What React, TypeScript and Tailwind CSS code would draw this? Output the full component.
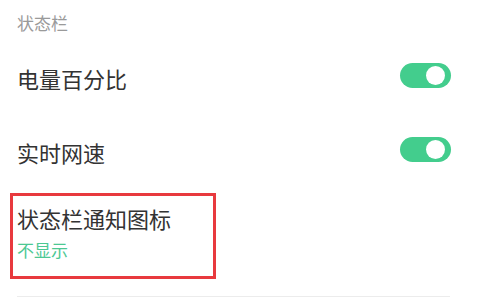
import React from "react";

function Toggle() {
  return (
    <div className="relative h-[25px] w-[51px] rounded-full bg-[#43cd8d]">
      <div className="absolute left-[26px] top-[3px] h-[19px] w-[19px] rounded-full bg-white" />
    </div>
  );
}

export default function App() {
  return (
    <div
      className="w-[478px] h-[301px] bg-white overflow-hidden"
      style={{ fontFamily: '"Noto Sans CJK SC", "Noto Sans", sans-serif' }}
    >
      <div className="pl-[17px] pt-[14px] pb-[10px] text-[17px] leading-[17px] text-[#9a9a9a]">
        状态栏
      </div>
      <div className="flex h-[74px] items-center justify-between pl-[17px] pr-[27px]">
        <span className="text-[22px] leading-[22px] text-[#333333]">电量百分比</span>
        <div className="-mt-[5px]">
          <Toggle />
        </div>
      </div>
      <div className="flex h-[74px] items-center justify-between pl-[17px] pr-[27px]">
        <span className="text-[22px] leading-[22px] text-[#333333]">实时网速</span>
        <div className="-mt-[5px]">
          <Toggle />
        </div>
      </div>
      <div className="ml-[10px] mt-[4px] h-[86px] w-[206px] border-[3px] border-[#e8393e] pl-[4px] pt-[11px]">
        <div className="text-[22px] leading-[22px] text-[#333333]">状态栏通知图标</div>
        <div className="mt-[12px] text-[17px] leading-[17px] text-[#4cc893]">不显示</div>
      </div>
      <div className="ml-[17px] mt-[17px] h-px w-[433px] bg-[#ececec]" />
    </div>
  );
}
